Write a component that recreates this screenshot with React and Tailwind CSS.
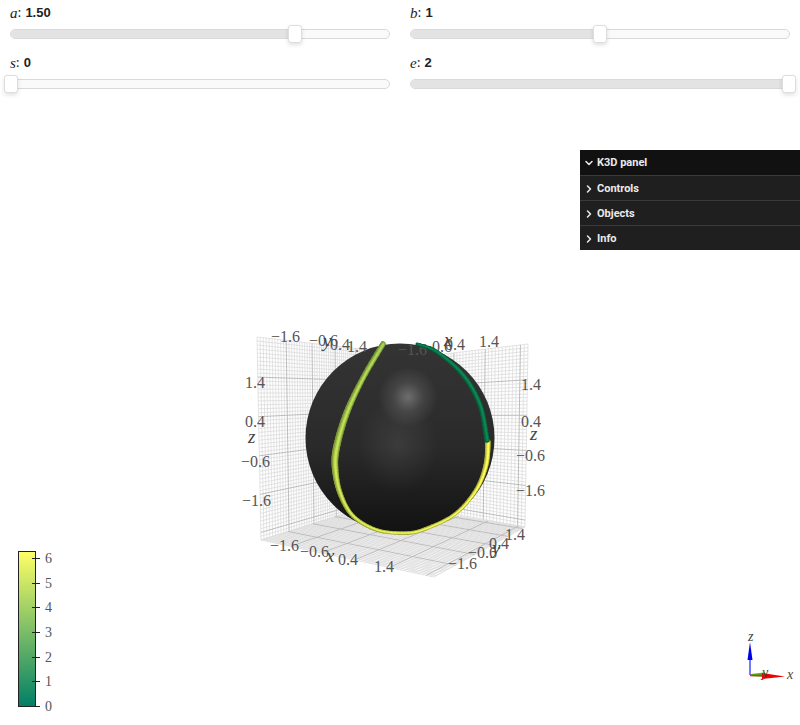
import { ChevronDown, ChevronRight } from "lucide-react";

const sliders = [
  { name: "a", value: "1.50", pct: 0.75 },
  { name: "b", value: "1", pct: 0.5 },
  { name: "s", value: "0", pct: 0 },
  { name: "e", value: "2", pct: 1 },
];

const panelRows = ["Controls", "Objects", "Info"];

// maps the unit square onto a wall or floor quad, with perspective
function quadMap(p00, p10, p11, p01) {
  const dx1 = p10[0] - p11[0];
  const dx2 = p01[0] - p11[0];
  const sx = p00[0] - p10[0] + p11[0] - p01[0];
  const dy1 = p10[1] - p11[1];
  const dy2 = p01[1] - p11[1];
  const sy = p00[1] - p10[1] + p11[1] - p01[1];
  const den = dx1 * dy2 - dx2 * dy1;
  const g = (sx * dy2 - dx2 * sy) / den;
  const h = (dx1 * sy - sx * dy1) / den;
  const a = p10[0] - p00[0] + g * p10[0];
  const b = p01[0] - p00[0] + h * p01[0];
  const d = p10[1] - p00[1] + g * p10[1];
  const e = p01[1] - p00[1] + h * p01[1];
  return (u, v) => {
    const w = g * u + h * v + 1;
    return [(a * u + b * v + p00[0]) / w, (d * u + e * v + p00[1]) / w];
  };
}

function GridFace({ corners }) {
  const map = quadMap(...corners);
  const lines = [];
  for (let i = 0; i <= 52; i++) {
    const t = i / 52;
    const major = i % 10 === 0 && i > 0 && i < 52 ? true : false;
    lines.push({ from: map(t, 0), to: map(t, 1), major });
    lines.push({ from: map(0, t), to: map(1, t), major });
  }
  return (
    <g>
      {lines.filter((l) => !l.major).map((l, i) => (
        <line key={i} x1={l.from[0]} y1={l.from[1]} x2={l.to[0]} y2={l.to[1]} stroke="#dcdcdc" strokeWidth="0.8" />
      ))}
      {lines.filter((l) => l.major).map((l, i) => (
        <line key={i} x1={l.from[0]} y1={l.from[1]} x2={l.to[0]} y2={l.to[1]} stroke="#b5b5b5" strokeWidth="0.9" />
      ))}
    </g>
  );
}

function summer(t, light = 1) {
  const r = Math.round(255 * t * light);
  const g = Math.round(255 * (0.5 + 0.5 * t) * light);
  const b = Math.round(255 * 0.33 * light);
  return `rgb(${Math.min(r, 255)},${Math.min(g, 255)},${Math.min(b, 255)})`;
}

// catmull-rom through [x, y, width, colour position]
function sampleCurve(pts) {
  const out = [];
  for (let i = 0; i < pts.length - 1; i++) {
    const p0 = pts[Math.max(i - 1, 0)];
    const p1 = pts[i];
    const p2 = pts[i + 1];
    const p3 = pts[Math.min(i + 2, pts.length - 1)];
    for (let s = 0; s < 8; s++) {
      const t = s / 8;
      const c = (k) =>
        0.5 *
        (2 * p1[k] +
          (p2[k] - p0[k]) * t +
          (2 * p0[k] - 5 * p1[k] + 4 * p2[k] - p3[k]) * t * t +
          (3 * p1[k] - p0[k] - 3 * p2[k] + p3[k]) * t * t * t);
      out.push([c(0), c(1), p1[2] + (p2[2] - p1[2]) * t, p1[3] + (p2[3] - p1[3]) * t]);
    }
  }
  out.push(pts[pts.length - 1]);
  return out;
}

function Tube({ points }) {
  const samples = sampleCurve(points);
  const segs = samples.slice(0, -1).map((p, i) => [p, samples[i + 1]]);
  return (
    <g strokeLinecap="round" fill="none">
      {segs.map(([p, q], i) => (
        <line key={i} x1={p[0]} y1={p[1]} x2={q[0]} y2={q[1]} stroke={summer(p[3], 0.68)} strokeWidth={p[2]} />
      ))}
      {segs.map(([p, q], i) => (
        <line key={i} x1={p[0] + 0.3} y1={p[1]} x2={q[0] + 0.3} y2={q[1]} stroke={summer(p[3], 0.86)} strokeWidth={p[2] * 0.62} />
      ))}
      {segs.map(([p, q], i) => (
        <line key={i} x1={p[0] + 0.5} y1={p[1]} x2={q[0] + 0.5} y2={q[1]} stroke={summer(p[3], 1.02)} strokeWidth={p[2] * 0.3} />
      ))}
    </g>
  );
}

const limeTube = [
  [383, 344, 5.5, 0.66],
  [363, 378, 5.5, 0.7],
  [347, 412, 6.5, 0.72],
  [337, 445, 7, 0.74],
  [335, 467, 6.5, 0.78],
  [340, 493, 5, 0.82],
  [353, 516, 4, 0.86],
  [377, 530, 3.5, 0.9],
  [405, 533, 3.5, 0.92],
  [425, 529, 3.5, 0.94],
  [455, 514, 3.5, 0.96],
  [476, 490, 4, 0.98],
  [486, 465, 5, 1],
  [488, 442, 5.5, 1],
];

const tealTube = [
  [417, 344, 3, 0.02],
  [437, 352, 4, 0.04],
  [463, 375, 5, 0.05],
  [480, 405, 5, 0.05],
  [487, 440, 5.5, 0.05],
];

// [text, x, baseline]
const tickLabels = [
  ["1.4", 245, 388], ["0.4", 245, 427], ["−0.6", 241, 467], ["−1.6", 242, 506],
  ["1.4", 521, 390], ["0.4", 521, 427], ["−0.6", 516, 461], ["−1.6", 516, 496],
  ["−1.6", 271, 342], ["−0.6", 309, 346], ["0.4", 330, 350], ["1.4", 347, 352],
  ["−1.6", 398, 355], ["−0.6", 423, 352], ["0.4", 445, 350], ["1.4", 479, 347],
  ["−1.6", 270, 551], ["−0.6", 300, 557], ["0.4", 338, 565], ["1.4", 374, 572],
  ["1.4", 505, 540], ["0.4", 489, 549], ["−0.6", 468, 558], ["−1.6", 448, 569],
];

const axisLabels = [
  ["z", 248, 443], ["z", 530, 440], ["y", 323, 347], ["x", 444, 346], ["x", 326, 562], ["y", 492, 554],
];

const barTicks = [
  ["6", 558], ["5", 583], ["4", 607], ["3", 632], ["2", 657], ["1", 681], ["0", 706],
];

function Scene() {
  return (
    <svg viewBox="0 100 800 625" className="block h-full w-full" style={{ fontFamily: "'Liberation Serif', serif" }}>
      <defs>
        <linearGradient id="ball" x1="0" y1="0" x2="0" y2="1">
          <stop offset="0" stopColor="#343434" />
          <stop offset="0.55" stopColor="#2a2a2a" />
          <stop offset="1" stopColor="#121212" />
        </linearGradient>
        <radialGradient id="glowTop">
          <stop offset="0" stopColor="#ffffff" stopOpacity="0.3" />
          <stop offset="0.5" stopColor="#ffffff" stopOpacity="0.1" />
          <stop offset="1" stopColor="#ffffff" stopOpacity="0" />
        </radialGradient>
        <radialGradient id="glowMid">
          <stop offset="0" stopColor="#ffffff" stopOpacity="0.08" />
          <stop offset="1" stopColor="#ffffff" stopOpacity="0" />
        </radialGradient>
        <linearGradient id="bar" x1="0" y1="0" x2="0" y2="1">
          <stop offset="0" stopColor="#ffff66" />
          <stop offset="1" stopColor="#007f66" />
        </linearGradient>
        <clipPath id="ballClip">
          <circle cx="400" cy="438" r="94.5" />
        </clipPath>
      </defs>

      <GridFace corners={[[257, 337], [378, 351], [378, 504], [261, 540]]} />
      <GridFace corners={[[378, 362], [528, 344], [525, 527], [378, 500]]} />
      <GridFace corners={[[261, 540], [378, 503], [525, 527], [434, 577]]} />

      <circle cx="400" cy="438" r="94.5" fill="url(#ball)" />
      <g clipPath="url(#ballClip)">
        <circle cx="408" cy="397" r="30" fill="url(#glowTop)" />
        <ellipse cx="398" cy="445" rx="40" ry="48" fill="url(#glowMid)" />
      </g>

      <g fill="#555555" fontSize="16">
        {tickLabels.map(([text, x, y], i) => (
          <text key={i} x={x} y={y}>{text}</text>
        ))}
      </g>
      <g fill="#444444" fontSize="19" fontStyle="italic">
        {axisLabels.map(([text, x, y], i) => (
          <text key={i} x={x} y={y}>{text}</text>
        ))}
      </g>

      <Tube points={limeTube} />
      <Tube points={tealTube} />

      <rect x="18.5" y="551.5" width="17" height="155" fill="url(#bar)" stroke="#222222" />
      {barTicks.map(([text, y]) => (
        <g key={text}>
          <line x1="32" y1={y + 0.5} x2="40" y2={y + 0.5} stroke="#222222" />
          <text x="45" y={y + 5} fontSize="14" fill="#555555">{text}</text>
        </g>
      ))}

      <line x1="750" y1="675" x2="750" y2="650" stroke="#4a5cff" strokeWidth="1.6" />
      <polygon points="750,642 747.5,660 752.5,660" fill="#0000ee" />
      <polygon points="751,674 765,672.5 765,677 751,676" fill="#22cc22" />
      <line x1="750" y1="675.5" x2="770" y2="675.5" stroke="#ff2020" strokeWidth="1.6" />
      <polygon points="785,676.5 762,673 762,679" fill="#f00000" />
      <g fill="#444444" fontSize="14" fontStyle="italic">
        <text x="748" y="641">z</text>
        <text x="762" y="677">y</text>
        <text x="787" y="679">x</text>
      </g>
    </svg>
  );
}

function Slider({ name, value, pct }) {
  return (
    <div className="h-12 pt-[5px]">
      <div className="flex h-4 items-center text-[13px] leading-4 text-[#222]">
        <span className="font-['Liberation_Serif',serif] text-[15px] italic">{name}</span>
        <span className="mr-1 font-['Liberation_Serif',serif] text-[14px]">:</span>
        <span className="font-bold">{value}</span>
      </div>
      <div className="relative mt-2 h-2.5 rounded-full border border-[#d9d9d9] bg-[#fafafa]">
        <div className="h-full rounded-full bg-[#e3e3e3]" style={{ width: `${pct * 100}%` }} />
        <div
          className="absolute top-[-5px] h-[18px] w-[14px] rounded-[3px] border border-[#dedede] bg-white shadow-[0_2px_4px_rgba(0,0,0,0.12)]"
          style={{ left: `${pct * 378 - 7}px` }}
        />
      </div>
    </div>
  );
}

export default function App() {
  return (
    <div className="relative flex h-[725px] w-[800px] flex-col overflow-hidden bg-white font-['Liberation_Sans',sans-serif]">
      <div className="grid h-[100px] grid-cols-2 gap-x-5 px-2.5">
        {sliders.map((s) => (
          <Slider key={s.name} {...s} />
        ))}
      </div>

      <div className="relative flex-1">
        <Scene />
        <div className="absolute right-0 top-[50px] w-[220px] font-['Roboto',sans-serif] text-[11px] font-bold text-[#ebebeb]">
          <div className="flex h-[25px] items-center gap-[2px] bg-[#111111] pl-[3px] pt-px">
            <ChevronDown size={12} strokeWidth={3} />
            <span>K3D panel</span>
          </div>
          {panelRows.map((row) => (
            <div key={row} className="flex h-[25px] items-center gap-[2px] border-t border-[#3a3a3a] bg-[#1f1f1f] pl-[3px] pt-[2px]">
              <ChevronRight size={12} strokeWidth={3} />
              <span>{row}</span>
            </div>
          ))}
        </div>
      </div>
    </div>
  );
}
